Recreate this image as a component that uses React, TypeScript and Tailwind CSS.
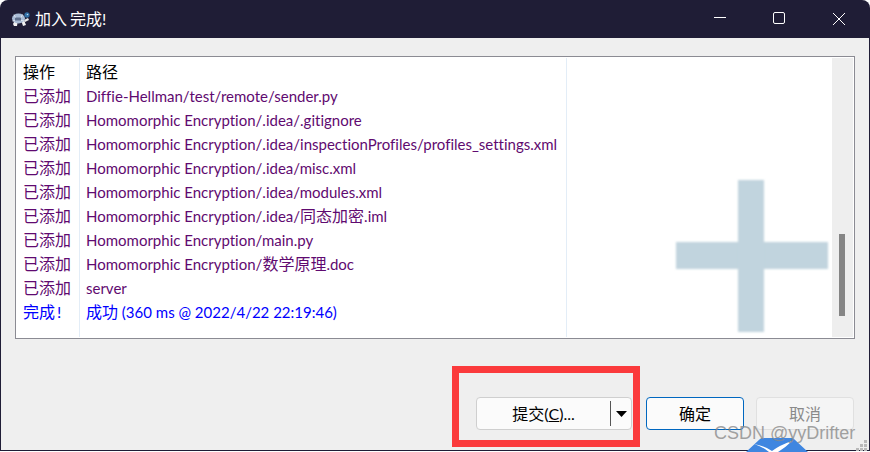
import React from "react";

const PURPLE = "text-[#5f0a70]";
const Cjk = ({ children }: { children: React.ReactNode }) => <span className="text-[16px]">{children}</span>;
const rows: [string, React.ReactNode][] = [
  ["已添加", "Diffie-Hellman/test/remote/sender.py"],
  ["已添加", "Homomorphic Encryption/.idea/.gitignore"],
  ["已添加", "Homomorphic Encryption/.idea/inspectionProfiles/profiles_settings.xml"],
  ["已添加", "Homomorphic Encryption/.idea/misc.xml"],
  ["已添加", "Homomorphic Encryption/.idea/modules.xml"],
  ["已添加", <>Homomorphic Encryption/.idea/<Cjk>同态加密</Cjk>.iml</>],
  ["已添加", "Homomorphic Encryption/main.py"],
  ["已添加", <>Homomorphic Encryption/<Cjk>数学原理</Cjk>.doc</>],
  ["已添加", "server"],
];

function Row({ a, b, cls }: { a: React.ReactNode; b: React.ReactNode; cls: string }) {
  return (
    <div className={`flex h-6 items-center whitespace-nowrap ${cls}`}>
      <div className="w-[63px] pl-[6px] text-[16px]">{a}</div>
      <div className="pl-[6px] text-[15px]">{b}</div>
    </div>
  );
}

function Turtle() {
  return (
    <svg width="20" height="16" viewBox="0 0 20 16">
      <path d="M3 13L5 9H8L7 15H4ZM11 9H14L16 14L13 15Z" fill="#f2f2f2" />
      <path d="M14 9L18 7L19 9L15 11Z" fill="#e8e8e8" />
      <ellipse cx="8.5" cy="7.5" rx="6.5" ry="5" fill="#a9bcd6" />
      <path d="M5 6.5H11V9.5H5Z" fill="#5f6f8c" />
      <path d="M4 3.5L5.5 6.5M12.5 3.5L11 6.5M2.5 10L5 9.5M14.5 10L11 9.5" stroke="#e6ebf2" strokeWidth="0.8" />
      <ellipse cx="17" cy="4" rx="2.6" ry="2.8" fill="#2f6ea5" />
      <circle cx="17.5" cy="3.5" r="0.8" fill="#bcd8ee" />
    </svg>
  );
}

export default function App() {
  return (
    <div className="relative h-[452px] w-[870px] overflow-hidden bg-white">
      <div
        className="flex h-[451px] flex-col overflow-hidden rounded-t-lg bg-[#efefef] text-[16px] leading-6 [font-variant-ligatures:none]"
        style={{ fontFamily: 'Lato, "Noto Sans CJK SC", sans-serif' }}
      >
        <div className="flex h-[38px] shrink-0 items-center bg-[#1f1d36] text-white">
          <div className="ml-[10px] flex h-4 w-5 items-center"><Turtle /></div>
          <div className="ml-[5px] flex gap-[3px]"><span>加入</span><span>完成!</span></div>
          <div className="ml-auto flex items-center">
            <svg width="14" height="14" viewBox="0 0 14 14" className="mr-[46px]"><path d="M1 5.5H13" stroke="#fff" strokeWidth="1" /></svg>
            <svg width="14" height="14" viewBox="0 0 14 14" className="mr-[45px]"><rect x="0.5" y="0.5" width="11" height="11" rx="1.5" fill="none" stroke="#fff" strokeWidth="1" /></svg>
            <svg width="14" height="14" viewBox="0 0 14 14" className="mr-[24px]"><path d="M1 1L13 13M13 1L1 13" stroke="#fff" strokeWidth="1" /></svg>
          </div>
        </div>

        <div className="flex min-h-0 flex-1 flex-col border-x border-b border-[#1f1d36]">
          <div className="mx-[14px] mt-[18px] flex h-[283px] border border-[#8b8b93] bg-white p-px">
            <div className="relative flex-1 pt-[2px]">
              <div className="absolute inset-y-0 left-[62px] w-px bg-[#e3edf7]" />
              <div className="absolute inset-y-0 left-[549px] w-px bg-[#e3edf7]" />
              <Row a="操作" b={<Cjk>路径</Cjk>} cls="text-black" />
              {rows.map(([a, b], i) => (
                <Row key={i} a={a} b={b} cls={PURPLE} />
              ))}
              <Row a={<>完成<span className="ml-[2px]">!</span></>} b={<><Cjk>成功</Cjk> (360 ms @ 2022/4/22 22:19:46)</>} cls="text-[#0000ff]" />
              <div className="absolute left-[659px] top-[122px] h-[152px] w-[152px]">
                <div className="absolute inset-x-0 top-[62px] h-[27px] bg-[#c1d4de] blur-[1px]" />
                <div className="absolute inset-y-0 left-[62px] w-[26px] bg-[#c1d4de] blur-[1px]" />
              </div>
            </div>
            <div className="relative w-[21px] shrink-0 bg-[#eeeeee]">
              <div className="absolute left-[7px] top-[176px] h-[82px] w-[6px] bg-[#858585]" />
            </div>
          </div>

          <div className="mt-[58px] flex items-center justify-end pr-[15px]">
            <div className="flex h-[33px] w-[156px] items-center rounded border border-[#cfcfcf] bg-[#fbfbfb] text-black">
              <div className="flex-1 text-center">提交(<span className="underline">C</span>)...</div>
              <div className="h-[25px] w-px bg-[#555]" />
              <div className="flex w-5 justify-center">
                <svg width="11" height="6" viewBox="0 0 11 6"><path d="M0 0H11L5.5 6Z" fill="#000" /></svg>
              </div>
            </div>
            <div className="ml-[14px] flex h-[33px] w-[98px] items-center justify-center rounded border border-[#0067c0] bg-[#fbfbfb] text-black">确定</div>
            <div className="ml-[12px] flex h-[33px] w-[98px] items-center justify-center rounded border border-[#e0e0e0] bg-[#f5f5f5] text-[#8a8a8a]">取消</div>
          </div>
        </div>
      </div>

      <div className="absolute left-[452px] top-[366px] h-[81px] w-[188px] border-[7px] border-[#fb3a3c]" />
      <svg width="64" height="14" viewBox="0 0 64 14" className="absolute left-[745px] top-[438px]">
        <path d="M15 1Q16 0 18 0H46Q48 0 49 1L63 14H1Z" fill="#3f86e0" />
        <path d="M9 6Q20 8 27 13Q35 7 47 3Q40 10 33 14H24Q18 9 9 6Z" fill="#fff" />
      </svg>
      <svg width="14" height="12" viewBox="0 0 14 12" className="absolute left-[855px] top-[440px]" fill="#b9b9b9">
        <rect x="9" y="0" width="3" height="3" />
        <rect x="5" y="4" width="3" height="3" />
        <rect x="9" y="4" width="3" height="3" />
        <rect x="1" y="8" width="3" height="3" />
        <rect x="5" y="8" width="3" height="3" />
        <rect x="9" y="8" width="3" height="3" />
      </svg>
      <div
        className="absolute left-[714px] top-[421px] text-[18px] leading-6 whitespace-nowrap text-[#8a8a8a]/80"
        style={{ fontFamily: '"Liberation Sans", sans-serif' }}
      >
        CSDN @yyDrifter
      </div>
    </div>
  );
}
